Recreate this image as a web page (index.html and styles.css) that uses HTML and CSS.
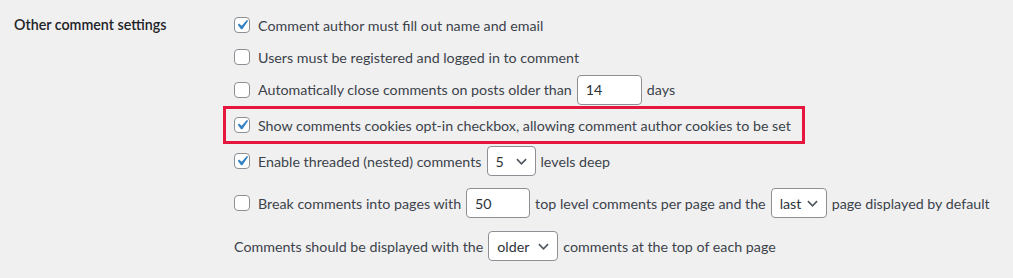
FILE: index.html
```html
<!DOCTYPE html>
<html lang="en">
  <head>
    <meta charset="UTF-8" />
    <title>Discussion Settings</title>
    <link rel="stylesheet" href="styles.css">
  </head>
  <body>
    <div class="form-table">
      <div class="field-label">Other comment settings</div>
      <div class="fieldset">
        <label class="row row-1">
          <span class="checkbox checked">
            <svg viewBox="0 0 20 20"><path d="M14.83 4.89l1.34.94-5.81 8.38H9.02L5.78 9.67l1.34-1.25 2.57 2.4z" /></svg>
          </span>
          Comment author must fill out name and email
        </label>
        <label class="row row-2">
          <span class="checkbox"></span>
          Users must be registered and logged in to comment
        </label>
        <label class="row row-3">
          <span class="checkbox"></span>
          Automatically close comments on posts older than
          <span class="text-input input-days">14</span>
          days
        </label>
        <label class="row row-4 highlight">
          <span class="checkbox checked">
            <svg viewBox="0 0 20 20"><path d="M14.83 4.89l1.34.94-5.81 8.38H9.02L5.78 9.67l1.34-1.25 2.57 2.4z" /></svg>
          </span>
          Show comments cookies opt-in checkbox, allowing comment author cookies to be set
        </label>
        <label class="row row-5">
          <span class="checkbox checked">
            <svg viewBox="0 0 20 20"><path d="M14.83 4.89l1.34.94-5.81 8.38H9.02L5.78 9.67l1.34-1.25 2.57 2.4z" /></svg>
          </span>
          Enable threaded (nested) comments
          <span class="select select-depth">5
            <svg class="chevron" viewBox="0 0 12 7"><path d="M1 1l5 5 5-5" /></svg>
          </span>
          levels deep
        </label>
        <label class="row row-6">
          <span class="checkbox"></span>
          Break comments into pages with
          <span class="text-input input-pages">50</span>
          top level comments per page and the
          <span class="select select-page">last
            <svg class="chevron" viewBox="0 0 12 7"><path d="M1 1l5 5 5-5" /></svg>
          </span>
          page displayed by default
        </label>
        <div class="row row-7">
          Comments should be displayed with the
          <span class="select select-order">older
            <svg class="chevron" viewBox="0 0 12 7"><path d="M1 1l5 5 5-5" /></svg>
          </span>
          comments at the top of each page
        </div>
      </div>
    </div>
  </body>
</html>
```

FILE: styles.css
```css
body {
  margin: 0;
  padding: 9px 0 0 14px;
  background: #f0f0f1;
  font-family: Lato, "Noto Sans", sans-serif;
  font-size: 14.25px;
  color: #3c434a;
}

.form-table {
  display: grid;
  grid-template-columns: 220px 1fr;
}

.field-label {
  height: 32px;
  line-height: 32px;
  font-weight: 600;
  color: #1d2327;
}

.fieldset {
  display: flex;
  flex-direction: column;
}

.row {
  display: flex;
  align-items: center;
  gap: 5px;
  white-space: nowrap;
}

.row-1,
.row-2 {
  height: 32px;
}

.row-3 {
  height: 33px;
}

.row-5 {
  height: 34px;
}

.row-6 {
  height: 50px;
}

.row-7 {
  height: 36px;
}

.highlight {
  box-sizing: border-box;
  width: 582px;
  height: 38px;
  margin-left: -11px;
  padding-left: 8px;
  border: 3px solid #e5173f;
}

.checkbox {
  box-sizing: border-box;
  width: 16px;
  height: 16px;
  margin-right: 3px;
  border: 1px solid #8c8f94;
  border-radius: 4px;
  background: #fff;
  display: flex;
  align-items: center;
  justify-content: center;
  flex-shrink: 0;
}

.checkbox svg {
  width: 20px;
  height: 20px;
  margin: -3px;
  fill: #3582c4;
}

.text-input,
.select {
  box-sizing: border-box;
  height: 30px;
  padding: 0 8px;
  border: 1px solid #8c8f94;
  border-radius: 4px;
  background: #fff;
  color: #2c3338;
  display: flex;
  align-items: center;
}

.input-days {
  width: 65px;
}

.input-pages {
  width: 64px;
}

.select {
  justify-content: space-between;
  padding-right: 8px;
}

.select-depth {
  width: 49px;
}

.select-page {
  width: 56px;
}

.select-order {
  width: 70px;
}

.chevron {
  width: 11px;
  height: 7px;
  fill: none;
  stroke: #50575e;
  stroke-width: 1.8;
}
```
